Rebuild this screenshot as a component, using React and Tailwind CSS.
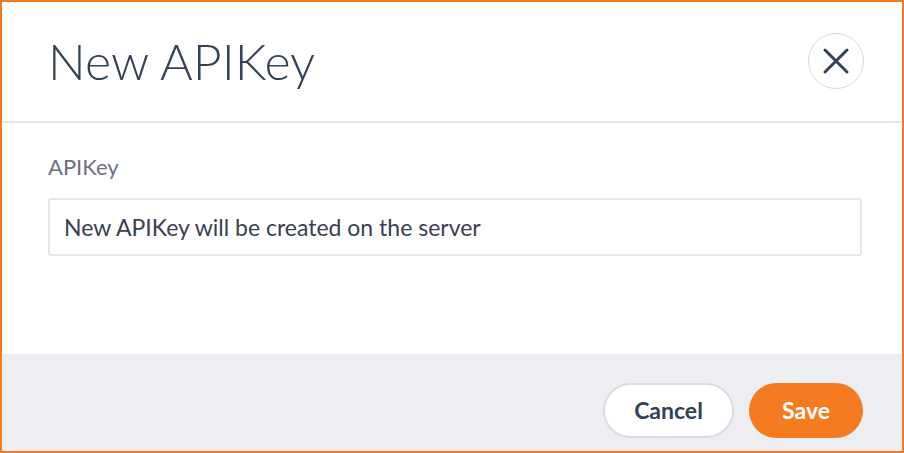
import React from "react";

export default function App() {
  return (
    <div className="w-[904px] h-[453px] border-2 border-[#f47b20] bg-white flex flex-col" style={{ fontFamily: "Lato, 'Open Sans', sans-serif" }}>
      <div className="h-[121px] shrink-0 flex items-center justify-between pl-[46px] pr-[38px] border-b-2 border-[#e6e8eb]">
        <h1 className="text-[50px] font-light text-[#334155] leading-none -mt-[2px]">New APIKey</h1>
        <button className="w-[56px] h-[56px] rounded-full border border-[#d5d9de] flex items-center justify-center -mt-[2px]">
          <svg width="28" height="28" viewBox="0 0 28 28" fill="none" stroke="#334155" strokeWidth="3" strokeLinecap="round">
            <path d="M3 3L25 25M25 3L3 25" />
          </svg>
        </button>
      </div>
      <div className="flex-1 pl-[46px] pr-[40px] pt-[33px]">
        <label className="block text-[22px] text-[#6b7280] leading-none">APIKey</label>
        <div className="mt-[20px] h-[58px] border-2 border-[#e3e6ea] rounded-[3px] flex items-center px-[14px] text-[23px] text-[#374151]">
          New APIKey will be created on the server
        </div>
      </div>
      <div className="h-[97px] shrink-0 bg-[#eceef1] flex items-start justify-end gap-[15px] pr-[39px] pt-[29px]">
        <button className="w-[131px] h-[55px] rounded-full bg-white border-2 border-[#d9dde2] text-[23px] font-bold text-[#334155]">Cancel</button>
        <button className="w-[114px] h-[55px] rounded-full bg-[#f47b20] text-[23px] font-bold text-white">Save</button>
      </div>
    </div>
  );
}
